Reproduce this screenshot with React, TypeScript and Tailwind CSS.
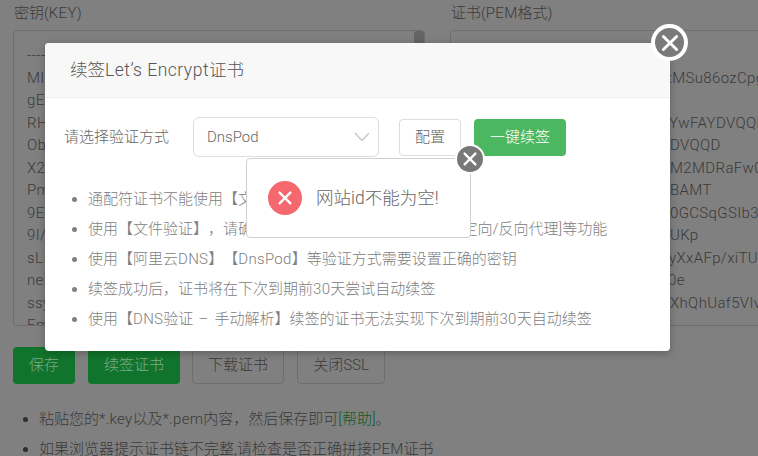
import React from "react";

const font = { fontFamily: 'Roboto, "Noto Sans CJK SC", sans-serif' };

const left = ["-----BEGIN", "MIIEvQIBADAN", "gEAAoIBAQC", "RHk2mJxQ", "ObT5nLvK", "X2aPfWqE", "PmYc8sUd", "9EoLr3Tg", "9I/bZx7N", "sL5hVkAi", "nei0GuMw", "ssyRq1Dt", "EmJf6CoH"];
const right = [
  { w: "w-auto", p: "", t: "-----BEGIN CERTIFICATE-----" },
  { w: "w-[203px]", p: "MIIFYDCCBEigAwIBAgISAgkq", t: "tMSu86ozCpgAB" },
  { w: "w-[206px]", p: "AQsFADBK", t: "" },
  { w: "w-[205px]", p: "MQswCQYDVQQGEwJVUzEWMBQG", t: "YwFAYDVQQK" },
  { w: "w-[206px]", p: "EwEwSTELMAkGA1UEAxMCUjNDVQQD", t: "DVQQD" },
  { w: "w-[206px]", p: "Ex4wHhcNMjMwNTEwMTIxNTZaFw0y", t: "M2MDRaFw0yMz" },
  { w: "w-[206px]", p: "AwNTEwMTIxMzM2WjAXMRUw", t: "BAMT" },
  { w: "w-[206px]", p: "DGV4YW1wbGUuY29tMIIBIjAN", t: "0GCSqGSIb3DQ" },
  { w: "w-[206px]", p: "MIIBCgKCAQEAu9fRnYz", t: "UKp" },
  { w: "w-[205px]", p: "kT2hQmWz7LvPc4GbN8y", t: "yXxAFp/xiTUN" },
  { w: "w-[204px]", p: "sD5JrE1oVaIt6Y3f", t: "0e" },
  { w: "w-[206px]", p: "qK8mLwZ2uCpG9nH", t: "XhQhUaf5VIvR" },
];

const X = ({ className }: { className: string }) => (
  <svg viewBox="0 0 20 20" className={className} fill="none" stroke="currentColor" strokeWidth="2.6" strokeLinecap="round">
    <path d="M4 4L16 16M16 4L4 16" />
  </svg>
);

export default function App() {
  return (
    <div className="relative h-[456px] w-[758px] overflow-hidden bg-[#808080] text-[#3a3a3a] font-light [text-spacing-trim:space-all]" style={font}>
      <div className="flex flex-col px-[13px] pt-[5px]">
        <div className="flex gap-[25px]">
          <div className="w-[412px] shrink-0">
            <div className="h-[25px] pl-px text-[15px] leading-[17px]">密钥(<span className="tracking-[0.3px]">KEY</span>)</div>
            <div className="relative h-[296px] overflow-hidden rounded-[4px] border border-[#6e6e6e] pl-[13px] pt-[13px] text-[15px] leading-[22.5px] tracking-[0.35px]">
              {left.map((l) => <div key={l} className="whitespace-nowrap">{l}</div>)}
              <div className="absolute right-0 top-0 h-[40px] w-[10px] rounded-[3px] bg-[#646464]" />
            </div>
          </div>
          <div className="w-[500px] shrink-0">
            <div className="h-[25px] pl-px text-[15px] leading-[17px]">证书(<span className="tracking-[0.3px]">PEM</span>格式)</div>
            <div className="h-[296px] overflow-hidden rounded-[4px] border border-[#6e6e6e] pl-[13px] pt-[13px] text-[15px] leading-[22.5px] tracking-[0.35px]">
              {right.map((l) => (
                <div key={l.t + l.p} className="flex whitespace-nowrap">
                  <span className={`${l.w} overflow-hidden`}>{l.p}</span>
                  <span>{l.t}</span>
                </div>
              ))}
            </div>
          </div>
        </div>
        <div className="mt-[21px] flex h-[37px] items-stretch text-[15px]">
          <div className="mr-[13px] flex w-[62px] items-center justify-center rounded-[4px] bg-[#11742c] text-[#7fa98a]">保存</div>
          <div className="mr-[12px] flex w-[92px] items-center justify-center rounded-[4px] bg-[#11742c] text-[#7fa98a]">续签证书</div>
          <div className="mr-[13px] flex w-[92px] items-center justify-center rounded-[4px] border border-[#6e6e6e]">下载证书</div>
          <div className="flex w-[88px] items-center justify-center rounded-[4px] border border-[#6e6e6e]">关闭SSL</div>
        </div>
        <ul className="mt-[20px] list-disc pl-[26px] text-[15px] leading-[30px] marker:text-[#2e2e2e]">
          <li>粘贴您的<span className="tracking-[0.3px]">*.key</span>以及<span className="tracking-[0.3px]">*.pem</span>内容，然后保存即可<span className="text-[#0e5a22]">[帮助]</span>。</li>
          <li>如果浏览器提示证书链不完整,请检查是否正确拼接<span className="tracking-[0.3px]">PEM</span>证书</li>
        </ul>
      </div>

      <div className="absolute left-[45px] top-[43px] h-[308px] w-[625px] rounded-[4px] bg-white text-[#808080] shadow-[0_2px_8px_rgba(0,0,0,0.25)]">
        <div className="flex h-[55px] items-center rounded-t-[4px] border-b border-[#eeeeee] bg-[#f8f8f8] pl-[25px] text-[17.5px] text-[#555] whitespace-pre">续签<span className="tracking-[0.5px]">Let’s Encrypt</span>证书</div>
        <div className="flex items-center pl-[19px] pt-[19px] text-[15px]">
          <div className="w-[129px] text-[#666]">请选择验证方式</div>
          <div className="flex h-[40px] w-[186px] items-center justify-between rounded-[6px] border border-[#dddddd] pl-[13px] pr-[8px] text-[#666]">
            DnsPod
            <svg viewBox="0 0 16 10" className="h-[10px] w-[16px] text-[#c8c8c8]" fill="none" stroke="currentColor" strokeWidth="1.4"><path d="M1 1L8 8.5L15 1" /></svg>
          </div>
          <div className="ml-[20px] flex h-[37px] w-[62px] items-center justify-center rounded-[4px] border border-[#dddddd] text-[#666]">配置</div>
          <div className="ml-[13px] flex h-[37px] w-[92px] items-center justify-center rounded-[4px] bg-[#4cb761] text-white">一键续签</div>
        </div>
        <ul className="mt-[27px] list-disc pl-[43px] text-[15px] leading-[30px] marker:text-[#808080]">
          <li>通配符证书不能使用【文件验证】，请选择DNS验证</li>
          <li>使用【文件验证】，请确保域名可正常访问并未开启<span className="ml-[11px]">[重定向/反向代理]等功能</span></li>
          <li>使用【阿里云<span className="tracking-[0.3px]">DNS</span>】【<span className="tracking-[0.3px]">DnsPod</span>】等验证方式需要设置正确的密钥</li>
          <li>续签成功后，证书将在下次到期前<span className="tracking-[0.3px]">30</span>天尝试自动续签</li>
          <li>使用【<span className="tracking-[0.3px]">DNS</span>验证 <span className="mx-[1.5px] tracking-[1px]">–</span> 手动解析】续签的证书无法实现下次到期前<span className="tracking-[0.3px]">30</span>天自动续签</li>
        </ul>
      </div>

      <div className="absolute left-[651px] top-[24px] flex h-[37px] w-[37px] items-center justify-center rounded-full border-[4px] border-white bg-[#7a7a7a] text-white">
        <X className="h-[22px] w-[22px]" />
      </div>

      <div className="absolute left-[246px] top-[158px] flex h-[80px] w-[225px] items-center rounded-[4px] border border-[#d0d0d0] bg-white pl-[21px]">
        <div className="flex h-[34px] w-[34px] items-center justify-center rounded-full bg-[#f4686e] text-white">
          <X className="h-[18px] w-[18px]" />
        </div>
        <div className="ml-[14px] text-[17.5px] text-[#666]">网站id不能为空!</div>
      </div>
      <div className="absolute left-[457px] top-[146px] flex h-[26px] w-[26px] items-center justify-center rounded-full bg-[#787878] text-white shadow-[0_0_0_2px_white]">
        <X className="h-[18px] w-[18px]" />
      </div>
    </div>
  );
}
